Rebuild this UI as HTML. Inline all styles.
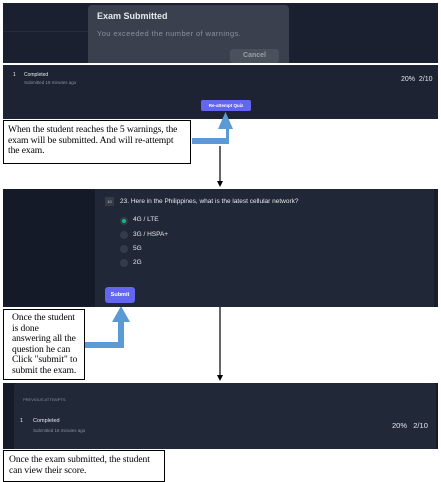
<!DOCTYPE html>
<html><head><style>
*{margin:0;padding:0;box-sizing:border-box}
body{width:441px;height:482px;background:#fff;position:relative;overflow:hidden;font-family:"Liberation Sans",sans-serif}
.a{position:absolute}
.ser{font-family:"Liberation Serif",serif;color:#000;font-size:9.6px;line-height:10.5px;letter-spacing:-.1px}
.box{border:1px solid #000;background:#fff;padding:2px 4px}
.w{color:#e6e8ec}
.g{color:#8a909c}
</style></head><body>
<div class="a" style="left:3px;top:3px;width:435px;height:60px;background:#1b2030"></div>
<div class="a" style="left:3px;top:31px;width:85px;height:1px;background:#262c3a"></div>
<div class="a" style="left:88px;top:5px;width:201px;height:58px;background:#3a404d;border-radius:4px 4px 0 0"></div>
<div class="a w" style="left:97px;top:11px;font-size:9px;font-weight:bold">Exam Submitted</div>
<div class="a" style="left:97px;top:29px;font-size:7.5px;color:#8b909b;letter-spacing:.4px">You exceeded the number of warnings.</div>
<div class="a" style="left:230px;top:49px;width:49px;height:14px;background:#4a505c;border-radius:3px;color:#9aa0aa;font-size:7px;text-align:center;line-height:14px;font-weight:bold">Cancel</div>
<div class="a" style="left:3px;top:65px;width:435px;height:54px;background:#1d2332"></div>
<div class="a w" style="left:13px;top:72px;font-size:5px">1</div>
<div class="a w" style="left:24px;top:72px;font-size:5px">Completed</div>
<div class="a g" style="left:24px;top:80px;font-size:4.5px">Submitted 18 minutes ago</div>
<div class="a w" style="left:401px;top:76px;font-size:7px;white-space:nowrap">20% &nbsp;2/10</div>
<div class="a" style="left:201px;top:100px;width:50px;height:11px;background:#6366f1;border-radius:2px;color:#fff;font-size:4.5px;text-align:center;line-height:11px;font-weight:bold">Re-attempt Quiz</div>
<div class="a box ser" style="left:3px;top:120px;width:188px;height:44px;padding-top:4px">When the student reaches the 5 warnings, the exam will be submitted. And will re-attempt the exam.</div>
<svg class="a" style="left:0;top:0" width="441" height="482">
<polygon points="192,138 226,138 226,129 218,129 225.5,112 233,129 229,129 229,144 192,144" fill="#5b9bd5"/>
<line x1="220" y1="146" x2="220" y2="182" stroke="#000" stroke-width="1.2"/>
<polygon points="217,181 223,181 220,187" fill="#000"/>
<polygon points="85,342 118,342 118,322 112,322 121,306 130,322 124,322 124,348 85,348" fill="#5b9bd5"/>
<line x1="220" y1="306" x2="220" y2="376" stroke="#000" stroke-width="1.2"/>
<polygon points="217,375 223,375 220,381" fill="#000"/>
</svg>
<div class="a" style="left:3px;top:189px;width:435px;height:118px;background:#202736"></div>
<div class="a" style="left:3px;top:189px;width:92px;height:118px;background:#141a27"></div>
<div class="a" style="left:434px;top:189px;width:4px;height:118px;background:#181e2b"></div>
<div class="a" style="left:105px;top:197px;width:9px;height:9px;background:#343b49;border-radius:1px;color:#ccc;font-size:4px;text-align:center;line-height:9px">10</div>
<div class="a w" style="left:120px;top:198px;font-size:6.5px">23. Here in the Philippines, what is the latest cellular network?</div>
<div class="a" style="left:120px;top:217px;width:8px;height:8px;border-radius:50%;background:#343b49"></div>
<div class="a" style="left:122px;top:219px;width:4px;height:4px;border-radius:50%;background:#10b981"></div>
<div class="a w" style="left:133px;top:216px;font-size:6.5px">4G / LTE</div>
<div class="a" style="left:120px;top:231px;width:8px;height:8px;border-radius:50%;background:#343b49"></div>
<div class="a w" style="left:133px;top:231px;font-size:6.5px">3G / HSPA+</div>
<div class="a" style="left:120px;top:245px;width:8px;height:8px;border-radius:50%;background:#343b49"></div>
<div class="a w" style="left:133px;top:245px;font-size:6.5px">5G</div>
<div class="a" style="left:120px;top:259px;width:8px;height:8px;border-radius:50%;background:#343b49"></div>
<div class="a w" style="left:133px;top:259px;font-size:6.5px">2G</div>
<div class="a" style="left:105px;top:287px;width:30px;height:16px;background:#6366f1;border-radius:3px;color:#fff;font-size:5.5px;text-align:center;line-height:16px;font-weight:bold">Submit</div>
<div class="a box ser" style="left:3px;top:309px;width:82px;height:71px;padding:3px 2px 0 8px;white-space:nowrap">Once the student<br>is done<br>answering all the<br>question he can<br>Click "submit" to<br>submit the exam.</div>
<div class="a" style="left:3px;top:383px;width:435px;height:66px;background:#151b28"></div>
<div class="a" style="left:14px;top:383px;width:422px;height:66px;background:#212838;border-radius:3px 3px 0 0"></div>
<div class="a g" style="left:23px;top:397px;font-size:4px">PREVIOUS ATTEMPTS</div>
<div class="a w" style="left:20px;top:418px;font-size:5.5px">1</div>
<div class="a w" style="left:33px;top:418px;font-size:5.5px">Completed</div>
<div class="a g" style="left:33px;top:428px;font-size:4.5px">Submitted 18 minutes ago</div>
<div class="a w" style="left:392px;top:421px;font-size:7.5px">20% &nbsp;&nbsp;2/10</div>
<div class="a box ser" style="left:3px;top:450px;width:162px;height:32px;padding:4px 5px">Once the exam submitted, the student can view their score.</div>
</body></html>
